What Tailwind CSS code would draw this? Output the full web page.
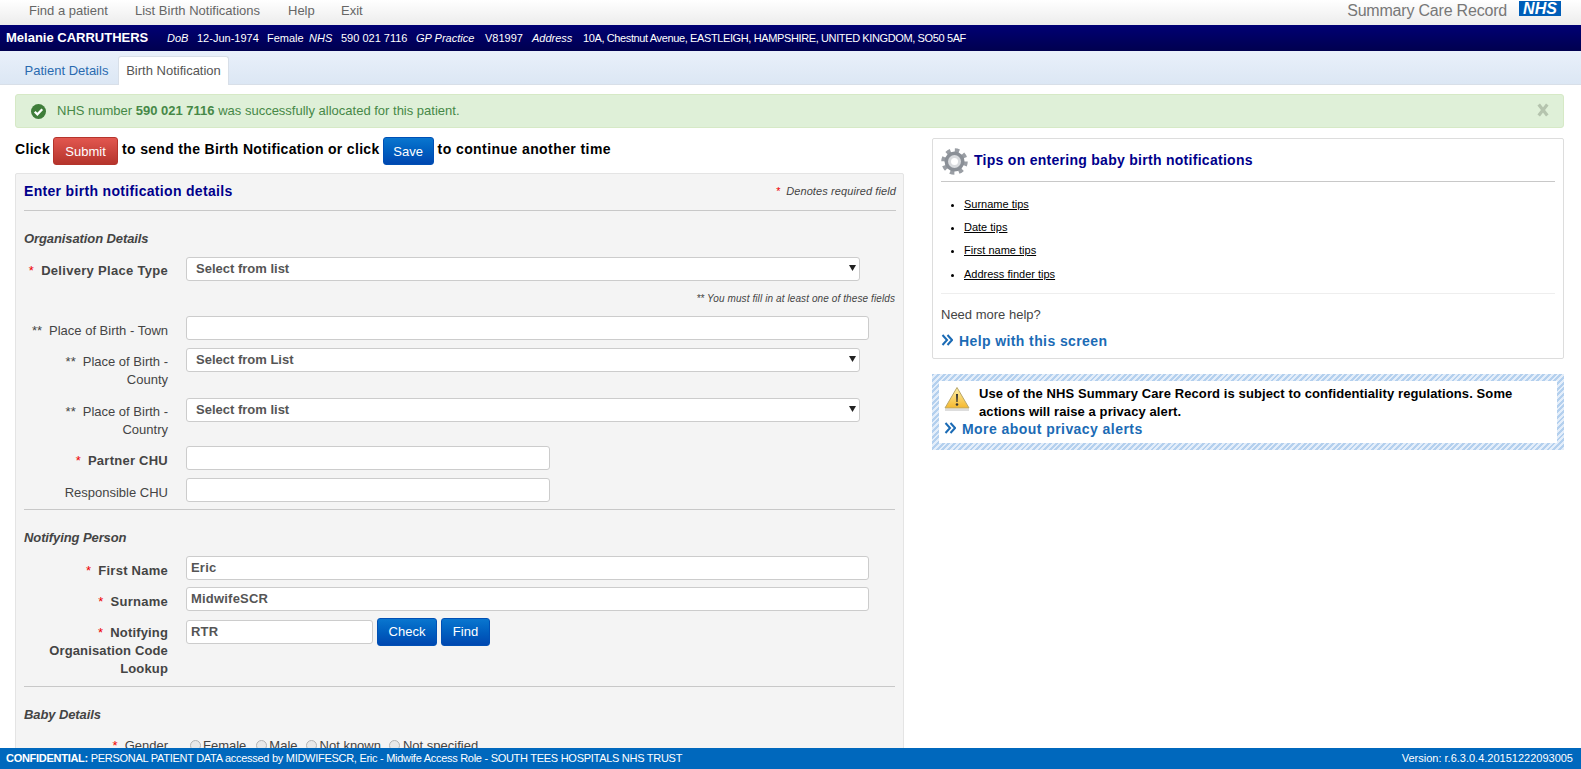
<!DOCTYPE html>
<html lang="en">
<head>
    <meta charset="UTF-8">
    <meta name="viewport" content="width=device-width, initial-scale=1.0">
    <title>Summary Care Record</title>
    <script src="https://cdn.jsdelivr.net/npm/@tailwindcss/browser@4"></script>
</head>
<body class="h-screen overflow-hidden flex flex-col bg-white font-['Liberation_Sans',Arial,sans-serif] text-[#333]">

    <!-- Top nav -->
    <header class="h-[25px] shrink-0 flex items-center justify-between bg-gradient-to-b from-white to-[#ececec] pl-[29px] pr-[20px] pb-[4px]">
        <nav class="flex text-[13px] text-[#666]">
            <a class="w-[106px]">Find a patient</a>
            <a class="w-[153px]">List Birth Notifications</a>
            <a class="w-[53px]">Help</a>
            <a>Exit</a>
        </nav>
        <div class="flex items-center">
            <span class="text-[16px] text-[#777] mr-[12px] tracking-[-0.2px]">Summary Care Record</span>
            <span class="w-[42px] h-[15px] -mt-[4px] bg-[#005eb8] text-white font-bold italic text-[16px] leading-[15px] text-center">NHS</span>
        </div>
    </header>

    <!-- Patient banner -->
    <div class="h-[26px] shrink-0 flex items-center bg-gradient-to-b from-[#000074] to-[#00004f] text-white text-[11px] pl-[6px]">
        <strong class="text-[13px] w-[161px]">Melanie CARRUTHERS</strong>
        <em class="w-[30px]">DoB</em>
        <span class="w-[70px]">12-Jun-1974</span>
        <span class="w-[42px]">Female</span>
        <em class="w-[32px]">NHS</em>
        <span class="w-[75px]">590 021 7116</span>
        <em class="w-[69px]">GP Practice</em>
        <span class="w-[47px]">V81997</span>
        <em class="w-[51px]">Address</em>
        <span class="tracking-[-0.38px]">10A, Chestnut Avenue, EASTLEIGH, HAMPSHIRE, UNITED KINGDOM, SO50 5AF</span>
    </div>

    <!-- Tabs -->
    <div class="h-[34px] shrink-0 flex items-end pl-[15px] bg-gradient-to-b from-[#e9f0fa] to-[#dce7f4] border-b border-[#d8dfe8]">
        <a class="w-[103px] h-[28px] leading-[30px] text-center text-[13px] text-[#2a6ab0]">Patient Details</a>
        <a class="w-[111px] h-[29px] -mb-px leading-[28px] text-center text-[13px] text-[#555] bg-white border border-b-0 border-[#d8dfe8] rounded-t-[3px]">Birth Notification</a>
    </div>

    <main class="flex-1 min-h-0 overflow-hidden px-[15px] pr-[17px]">
        <!-- Success alert -->
        <div class="mt-[9px] h-[34px] flex items-center bg-[#dff0d8] border border-[#d6e9c6] rounded-[3px] pl-[15px] pr-[14px] text-[13px] text-[#468847]">
            <svg class="w-[15px] h-[15px] mr-[11px]" viewBox="0 0 16 16">
                <circle cx="8" cy="8" r="8" fill="#3f7d3a"/>
                <path d="M4 8.2l2.8 2.8L12 5.6" fill="none" stroke="#fff" stroke-width="2.4"/>
            </svg>
            <span>NHS number <b>590 021 7116</b> was successfully allocated for this patient.</span>
            <svg class="ml-auto -mt-[3px] w-[12px] h-[14px]" viewBox="0 0 11 13">
                <path d="M1.5 1.5l8 10M9.5 1.5l-8 10" stroke="#b5c4ae" stroke-width="3"/>
            </svg>
        </div>

        <div class="flex items-start mt-[9px]">
            <!-- Left column -->
            <div class="w-[889px] shrink-0">
                <div class="h-[28px] flex items-center text-[14px] font-bold text-black tracking-[0.32px]">
                    <span class="-mt-[3px]">Click</span>
                    <button class="ml-[3px] mr-[4px] w-[65px] h-[28px] rounded-[3px] text-white font-normal text-[13px] tracking-normal pt-[1px] bg-gradient-to-b from-[#e2574f] to-[#b5342c] border border-[#b5342c]">Submit</button>
                    <span class="-mt-[3px]">to send the Birth Notification or click</span>
                    <button class="ml-[3px] mr-[4px] w-[51px] h-[28px] rounded-[3px] text-white font-normal text-[13px] tracking-normal pt-[1px] bg-gradient-to-b from-[#0a76cf] to-[#0047b0] border border-[#0050b5]">Save</button>
                    <span class="-mt-[3px] tracking-[0.42px]">to continue another time</span>
                </div>

                <section class="mt-[8px] bg-[#f4f4f4] border border-[#e4e4e4] rounded-[2px] px-[8px] pb-[40px] text-[#444]">
                    <div class="h-[37px] pb-[2px] flex items-center justify-between border-b border-[#c8c8c8] -mr-[1px]">
                        <h2 class="text-[14px] font-bold text-[#00008b] tracking-[0.32px]">Enter birth notification details</h2>
                        <p class="text-[11px] italic tracking-[0.1px]"><span class="text-[#e00] mr-[6px]">*</span>Denotes required field</p>
                    </div>

                    <h3 class="mt-[19px] text-[13px] leading-[18px] font-bold italic tracking-[-0.1px]">Organisation Details</h3>

                    <div class="mt-[8px] flex">
                        <label class="w-[144px] pt-[6px] leading-[18px] text-[13px] font-bold text-right tracking-[0.3px]"><span class="text-[#e00] font-normal mr-[7px]">*</span>Delivery Place Type</label>
                        <div class="relative ml-[18px] w-[674px]">
                            <select class="w-full h-[24px] appearance-none bg-white border border-[#ccc] rounded-[3px] pl-[9px] text-[13px] font-bold text-[#555]">
                                <option>Select from list</option>
                            </select>
                            <svg class="absolute right-[4px] top-[9px] w-[7px] h-[6px]" viewBox="0 0 7 6"><path d="M0 0h7L3.5 6z" fill="#222"/></svg>
                        </div>
                    </div>

                    <p class="mt-[12px] text-right text-[10px] italic leading-[12px] tracking-[0.1px]">** You must fill in at least one of these fields</p>

                    <div class="mt-[11px] flex">
                        <label class="w-[144px] pt-[6px] leading-[18px] text-[13px] text-right"><span class="mr-[7px]">**</span>Place of Birth - Town</label>
                        <input class="ml-[18px] w-[683px] h-[24px] bg-white border border-[#ccc] rounded-[3px]" />
                    </div>

                    <div class="mt-[7px] flex">
                        <label class="w-[144px] pt-[6px] leading-[18px] text-[13px] text-right"><span class="mr-[7px]">**</span>Place of Birth - County</label>
                        <div class="relative ml-[18px] w-[674px]">
                            <select class="w-full h-[24px] appearance-none bg-white border border-[#ccc] rounded-[3px] pl-[9px] text-[13px] font-bold text-[#555]">
                                <option>Select from List</option>
                            </select>
                            <svg class="absolute right-[4px] top-[9px] w-[7px] h-[6px]" viewBox="0 0 7 6"><path d="M0 0h7L3.5 6z" fill="#222"/></svg>
                        </div>
                    </div>

                    <div class="mt-[8px] flex">
                        <label class="w-[144px] pt-[6px] leading-[18px] text-[13px] text-right"><span class="mr-[7px]">**</span>Place of Birth - Country</label>
                        <div class="relative ml-[18px] w-[674px]">
                            <select class="w-full h-[24px] appearance-none bg-white border border-[#ccc] rounded-[3px] pl-[9px] text-[13px] font-bold text-[#555]">
                                <option>Select from list</option>
                            </select>
                            <svg class="absolute right-[4px] top-[9px] w-[7px] h-[6px]" viewBox="0 0 7 6"><path d="M0 0h7L3.5 6z" fill="#222"/></svg>
                        </div>
                    </div>

                    <div class="mt-[7px] flex">
                        <label class="w-[144px] pt-[6px] leading-[18px] text-[13px] font-bold text-right tracking-[0.25px]"><span class="text-[#e00] font-normal mr-[7px]">*</span>Partner CHU</label>
                        <input class="ml-[18px] w-[364px] h-[24px] bg-white border border-[#ccc] rounded-[3px]" />
                    </div>

                    <div class="mt-[8px] flex">
                        <label class="w-[144px] pt-[6px] leading-[18px] text-[13px] text-right">Responsible CHU</label>
                        <input class="ml-[18px] w-[364px] h-[24px] bg-white border border-[#ccc] rounded-[3px]" />
                    </div>

                    <hr class="mt-[7px] border-[#c8c8c8]" />

                    <h3 class="mt-[19px] text-[13px] leading-[18px] font-bold italic tracking-[-0.1px]">Notifying Person</h3>

                    <div class="mt-[9px] flex">
                        <label class="w-[144px] pt-[6px] leading-[18px] text-[13px] font-bold text-right tracking-[0.25px]"><span class="text-[#e00] font-normal mr-[7px]">*</span>First Name</label>
                        <input class="ml-[18px] w-[683px] h-[24px] bg-white border border-[#ccc] rounded-[3px] pl-[4px] text-[13px] font-bold text-[#555] tracking-[0.2px]" value="Eric" />
                    </div>

                    <div class="mt-[7px] flex">
                        <label class="w-[144px] pt-[6px] leading-[18px] text-[13px] font-bold text-right tracking-[0.25px]"><span class="text-[#e00] font-normal mr-[7px]">*</span>Surname</label>
                        <input class="ml-[18px] w-[683px] h-[24px] bg-white border border-[#ccc] rounded-[3px] pl-[4px] text-[13px] font-bold text-[#555] tracking-[0.2px]" value="MidwifeSCR" />
                    </div>

                    <div class="mt-[9px] flex">
                        <label class="w-[144px] pt-[4px] leading-[18px] text-[13px] font-bold text-right tracking-[0.15px]"><span class="text-[#e00] font-normal mr-[7px]">*</span>Notifying Organisation Code Lookup</label>
                        <input class="ml-[18px] w-[187px] h-[24px] bg-white border border-[#ccc] rounded-[3px] pl-[4px] text-[13px] font-bold text-[#555] tracking-[0.2px]" value="RTR" />
                        <button class="ml-[4px] -mt-[2px] w-[60px] h-[28px] rounded-[3px] text-white text-[13px] bg-gradient-to-b from-[#0a76cf] to-[#0047b0] border border-[#0050b5]">Check</button>
                        <button class="ml-[4px] -mt-[2px] w-[49px] h-[28px] rounded-[3px] text-white text-[13px] bg-gradient-to-b from-[#0a76cf] to-[#0047b0] border border-[#0050b5]">Find</button>
                    </div>

                    <hr class="mt-[8px] border-[#c8c8c8]" />

                    <h3 class="mt-[19px] text-[13px] leading-[18px] font-bold italic tracking-[-0.1px]">Baby Details</h3>

                    <div class="mt-[8px] flex">
                        <label class="w-[144px] pt-[5px] leading-[18px] text-[13px] text-right"><span class="text-[#e00] mr-[7px]">*</span>Gender</label>
                        <div class="ml-[22px] pt-[5px] flex items-center text-[13px] leading-[18px]">
                            <input type="radio" name="gender" class="appearance-none w-[11px] h-[11px] mr-[2px] rounded-full border border-[#b5b5b5] bg-[#e8e8e8]" /><span class="mr-[10px]">Female</span>
                            <input type="radio" name="gender" class="appearance-none w-[11px] h-[11px] mr-[2px] rounded-full border border-[#b5b5b5] bg-[#e8e8e8]" /><span class="mr-[8px]">Male</span>
                            <input type="radio" name="gender" class="appearance-none w-[11px] h-[11px] mr-[3px] rounded-full border border-[#b5b5b5] bg-[#e8e8e8]" /><span class="mr-[8px]">Not known</span>
                            <input type="radio" name="gender" class="appearance-none w-[11px] h-[11px] mr-[3px] rounded-full border border-[#b5b5b5] bg-[#e8e8e8]" /><span>Not specified</span>
                        </div>
                    </div>
                </section>
            </div>

            <!-- Right column -->
            <aside class="ml-[28px] mt-[1px] flex-1 min-w-0">
                <div class="h-[221px] border border-[#ddd] rounded-[2px] px-[8px]">
                    <div class="h-[43px] flex items-center border-b border-[#c8c8c8]">
                        <svg class="w-[27px] h-[27px] mr-[6px] -mb-[2px]" viewBox="0 0 27 27">
                            <circle cx="13.5" cy="13.5" r="11" fill="none" stroke="#9a9ea4" stroke-width="4.5" stroke-dasharray="4.32 4.32"/>
                            <circle cx="13.5" cy="13.5" r="10" fill="#8b9097"/>
                            <circle cx="13.5" cy="13.5" r="6.5" fill="#d9dbde"/>
                            <circle cx="13.5" cy="13.5" r="3.5" fill="#fff"/>
                        </svg>
                        <h2 class="text-[14px] font-bold text-[#00008b] tracking-[0.28px]">Tips on entering baby birth notifications</h2>
                    </div>
                    <ul class="mt-[13px] list-disc pl-[23px] text-[11px] leading-[18px] text-black">
                        <li class="h-[23px]"><a class="underline">Surname tips</a></li>
                        <li class="h-[23px]"><a class="underline">Date tips</a></li>
                        <li class="h-[24px]"><a class="underline">First name tips</a></li>
                        <li class="h-[18px]"><a class="underline">Address finder tips</a></li>
                    </ul>
                    <div class="mt-[10px] border-t border-[#eee] pt-[12px] text-[13px] leading-[18px] text-[#444]">Need more help?</div>
                    <a class="mt-[7px] flex items-center text-[14px] font-bold text-[#1b6bb5] tracking-[0.4px]">
                        <svg class="w-[12px] h-[12px] mr-[6px] -mt-[4px]" viewBox="0 0 12 12"><path d="M1.500 1l4.500 5-4.500 5M6.500 1l4.500 5-4.500 5" fill="none" stroke="#1b6bb5" stroke-width="2"/></svg>
                        Help with this screen
                    </a>
                </div>

                <div class="mt-[15px] h-[76px] p-[7px] bg-[repeating-linear-gradient(135deg,#b4d0ee_0,#b4d0ee_2px,#e4eefa_2px,#e4eefa_4px)]">
                    <div class="h-full bg-white pl-[5px] pt-[4px] pr-[8px]">
                        <div class="flex">
                            <svg class="shrink-0 w-[26px] h-[26px] mt-[1px]" viewBox="0 0 26 26">
                                <defs><linearGradient id="warn" x1="0" y1="0" x2="0" y2="1"><stop offset="0" stop-color="#fdf0a8"/><stop offset="1" stop-color="#f5b82e"/></linearGradient></defs>
                                <path d="M13 1.500L25 22H1z" fill="url(#warn)" stroke="#b9a66a" stroke-width="1" stroke-linejoin="round"/>
                                <rect x="1" y="23" width="24" height="2" fill="#ddd"/>
                                <path d="M12 8h2l-.4 8h-1.200z" fill="#333"/>
                                <circle cx="13" cy="18.500" r="1.300" fill="#333"/>
                            </svg>
                            <p class="ml-[9px] text-[13px] font-bold leading-[18px] text-black tracking-[0.1px]">Use of the NHS Summary Care Record is subject to confidentiality regulations. Some actions will raise a privacy alert.</p>
                        </div>
                        <a class="-mt-[2px] flex items-center text-[14px] font-bold text-[#1b6bb5] tracking-[0.44px]">
                            <svg class="w-[12px] h-[12px] mr-[6px] -mt-[4px]" viewBox="0 0 12 12"><path d="M1.500 1l4.500 5-4.500 5M6.500 1l4.500 5-4.500 5" fill="none" stroke="#1b6bb5" stroke-width="2"/></svg>
                            More about privacy alerts
                        </a>
                    </div>
                </div>
            </aside>
        </div>
    </main>

    <!-- Footer -->
    <footer class="h-[21px] shrink-0 flex items-center justify-between bg-[#0068bd] text-white text-[11px] pl-[6px] pr-[8px]">
        <span class="tracking-[-0.28px]"><b>CONFIDENTIAL:</b> PERSONAL PATIENT DATA accessed by MIDWIFESCR, Eric - Midwife Access Role - SOUTH TEES HOSPITALS NHS TRUST</span>
        <span>Version: r.6.3.0.4.20151222093005</span>
    </footer>
</body>
</html>
